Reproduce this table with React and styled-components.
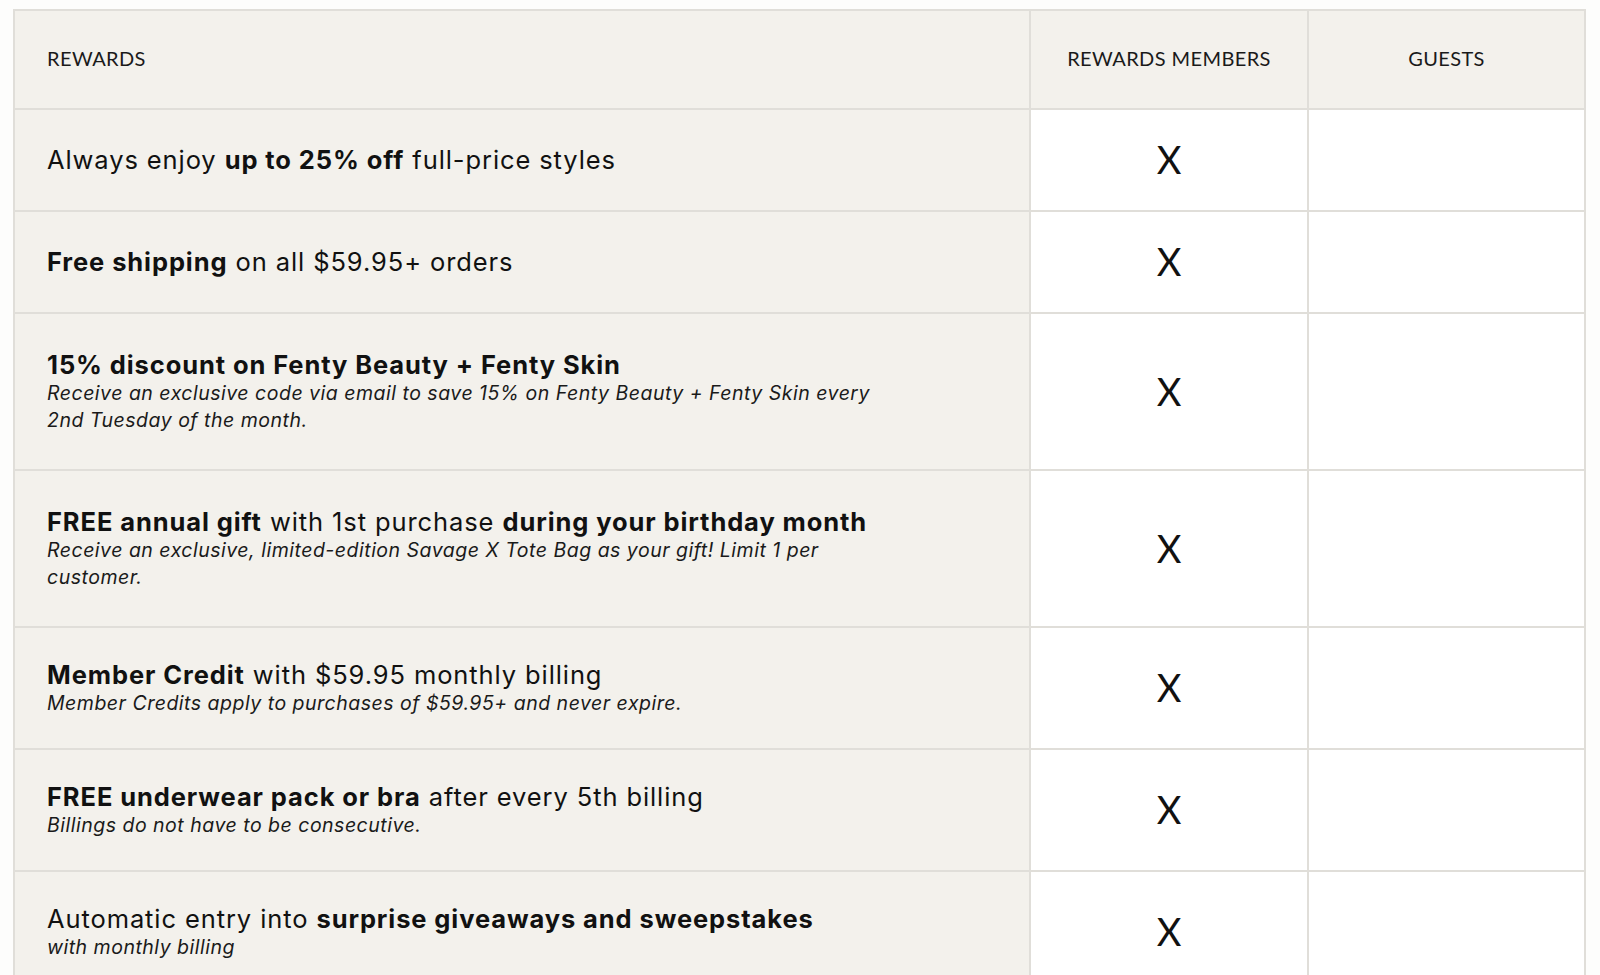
import React from "react";
import styled, { createGlobalStyle } from "styled-components";

const GlobalStyle = createGlobalStyle`
  body {
    margin: 0;
    background: #fdfdfc;
    font-family: "Inter", "Liberation Sans", sans-serif;
    color: #111;
  }
`;

const Page = styled.div`
  padding: 9px 14px 0 13px;
`;

const Table = styled.div`
  display: grid;
  grid-template-columns: 1fr 278px 277px;
  border-left: 2px solid #e0ded9;
  border-top: 2px solid #e0ded9;
`;

const Cell = styled.div`
  display: flex;
  align-items: center;
  justify-content: ${(p) => (p.center ? "center" : "flex-start")};
  height: ${(p) => p.h}px;
  box-sizing: border-box;
  border-right: 2px solid #e0ded9;
  border-bottom: 2px solid #e0ded9;
  background: ${(p) => (p.shaded ? "#f3f1ec" : "#ffffff")};
  padding: 0 ${(p) => (p.center ? "0" : "32px")};
`;

const HeadCell = styled(Cell)`
  padding-bottom: 3px;
`;

const HeadLabel = styled.span`
  font-family: "Lato", "Liberation Sans", sans-serif;
  font-size: 20px;
  letter-spacing: 0.4px;
  color: #1a1a1a;
  text-transform: uppercase;
`;

const Perk = styled.div`
  display: flex;
  flex-direction: column;
`;

const Title = styled.div`
  font-size: 25.5px;
  line-height: 30px;
  letter-spacing: 0.9px;

  b {
    font-weight: 700;
  }
`;

const Note = styled.div`
  font-size: 19.5px;
  font-style: italic;
  line-height: 27px;
  letter-spacing: 0.5px;
  max-width: 835px;
  color: #1a1a1a;
`;

const Mark = styled.span`
  font-family: "Lato", "Liberation Sans", sans-serif;
  font-size: 38px;
  font-weight: 400;
  color: #111;
  margin-top: -2px;
`;

const perks = [
  {
    h: 102,
    title: (
      <>
        Always enjoy <b>up to 25% off</b> full-price styles
      </>
    ),
  },
  {
    h: 102,
    title: (
      <>
        <b>Free shipping</b> on all $59.95+ orders
      </>
    ),
  },
  {
    h: 157,
    title: <b>15% discount on Fenty Beauty + Fenty Skin</b>,
    note: "Receive an exclusive code via email to save 15% on Fenty Beauty + Fenty Skin every 2nd Tuesday of the month.",
  },
  {
    h: 157,
    title: (
      <>
        <b>FREE annual gift</b> with 1st purchase{" "}
        <b>during your birthday month</b>
      </>
    ),
    note: "Receive an exclusive, limited-edition Savage X Tote Bag as your gift! Limit 1 per customer.",
  },
  {
    h: 122,
    title: (
      <>
        <b>Member Credit</b> with $59.95 monthly billing
      </>
    ),
    note: "Member Credits apply to purchases of $59.95+ and never expire.",
  },
  {
    h: 122,
    title: (
      <>
        <b>FREE underwear pack or bra</b> after every 5th billing
      </>
    ),
    note: "Billings do not have to be consecutive.",
  },
  {
    h: 122,
    title: (
      <>
        Automatic entry into <b>surprise giveaways and sweepstakes</b>
      </>
    ),
    note: "with monthly billing",
  },
];

const App = () => {
  return (
    <>
      <GlobalStyle />
      <Page>
        <Table>
          <HeadCell h={99} shaded>
            <HeadLabel>Rewards</HeadLabel>
          </HeadCell>
          <HeadCell h={99} shaded center>
            <HeadLabel>Rewards Members</HeadLabel>
          </HeadCell>
          <HeadCell h={99} shaded center>
            <HeadLabel>Guests</HeadLabel>
          </HeadCell>
          {perks.map((item, i) => (
            <React.Fragment key={i}>
              <Cell h={item.h} shaded>
                <Perk>
                  <Title>{item.title}</Title>
                  {item.note && <Note>{item.note}</Note>}
                </Perk>
              </Cell>
              <Cell h={item.h} center>
                <Mark>X</Mark>
              </Cell>
              <Cell h={item.h} center />
            </React.Fragment>
          ))}
        </Table>
      </Page>
    </>
  );
};

export default App;
